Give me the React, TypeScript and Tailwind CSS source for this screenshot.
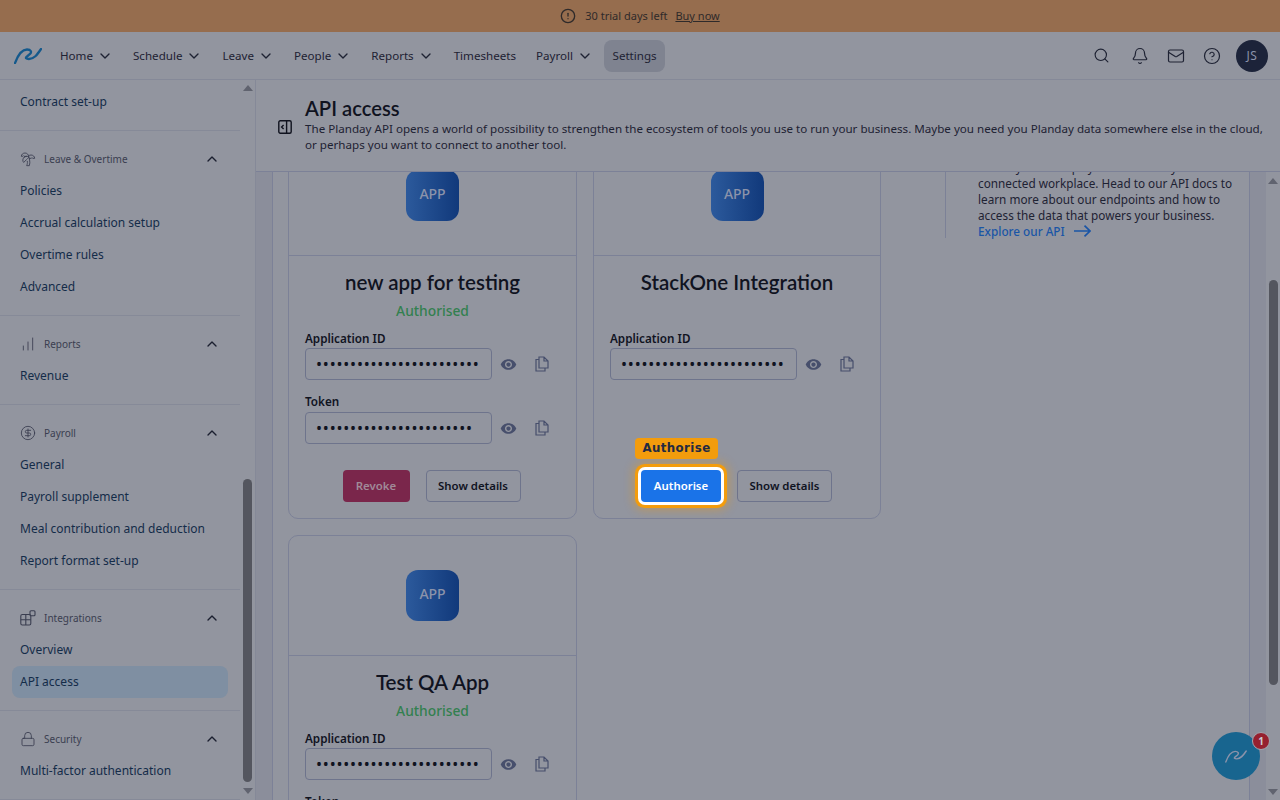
import { Bell, ChartNoAxesColumnIncreasing, ChevronDown, ChevronUp, CircleAlert, CircleDollarSign, CircleHelp, Lock, Mail, Search, TreePalm } from "lucide-react";
import { MdVisibility } from "react-icons/md";
import type { ReactNode } from "react";

const font = { fontFamily: '"Noto Sans", sans-serif' };
const titleFont = { fontFamily: 'Lato, "Noto Sans", sans-serif' };

const navItems = [
  { label: "Home", menu: true },
  { label: "Schedule", menu: true },
  { label: "Leave", menu: true },
  { label: "People", menu: true },
  { label: "Reports", menu: true },
  { label: "Timesheets", menu: false },
  { label: "Payroll", menu: true },
];

function Logo({ className, width = 2 }: { className: string; width?: number }) {
  return (
    <svg viewBox="0 0 28 16" fill="none" stroke="currentColor" strokeWidth={width} strokeLinecap="round" className={className}>
      <path d="M1 15 C4 7 8 1.5 13 1.5 C17 1.5 18 4 16 6 L13 8.5 C11 10 12 11 15 11 C20 11 23 7 27 1" />
    </svg>
  );
}

function IntegrationsIcon() {
  return (
    <svg viewBox="0 0 16 16" fill="none" stroke="currentColor" strokeWidth="1.1" className="w-4 h-4">
      <rect x="0.8" y="4.5" width="10" height="10.5" rx="1.5" />
      <path d="M0.8 9.7 H10.8 M5.8 4.5 V15" />
      <rect x="10" y="0.8" width="5" height="5" rx="1" />
    </svg>
  );
}

function CollapseIcon() {
  return (
    <svg viewBox="0 0 14 14" fill="none" stroke="currentColor" strokeWidth="1.4" className="w-[14px] h-[14px]">
      <rect x="0.8" y="0.8" width="12.4" height="12.4" rx="1.5" />
      <path d="M8.6 0.8 V13.2 M5.6 5 L3.6 7 L5.6 9" />
    </svg>
  );
}

function CopyIcon() {
  return (
    <svg viewBox="0 0 14 16" fill="none" stroke="currentColor" strokeWidth="1.2" className="w-[14px] h-4 text-[#474f6c]">
      <path d="M4 1 H9 L13 5 V12 H4 Z M9 1 V5 H13" />
      <path d="M4 3.5 H1 V15 H10 V12" />
    </svg>
  );
}

function ExploreArrow() {
  return (
    <svg viewBox="0 0 17 12" fill="none" stroke="currentColor" strokeWidth="1.7" className="w-[17px] h-3 ml-[9px]">
      <path d="M0 6 H16 M10.5 0.7 L16 6 L10.5 11.3" />
    </svg>
  );
}

function SideItem({ label, active }: { label: string; active?: boolean }) {
  return (
    <div className={`h-8 mx-3 px-2 flex items-center rounded-lg text-xs text-[#142c49] ${active ? "bg-[#7f8fa2]" : ""}`}>
      {label}
    </div>
  );
}

function SideSection({ icon, title, items, active }: { icon: ReactNode; title: string; items: string[]; active?: string }) {
  return (
    <div className="pt-4 pb-3 border-b border-[#868a98]">
      <div className="h-6 mb-1 pl-5 pr-5 flex items-center text-[#3a3e50]">
        <span className="w-6 flex items-center">{icon}</span>
        <span className="text-[10px] flex-1">{title}</span>
        <ChevronUp className="w-4 h-4 text-[#1b1f2f]" />
      </div>
      {items.map((item) => (
        <SideItem key={item} label={item} active={item === active} />
      ))}
    </div>
  );
}

function SecretField({ label, value }: { label: string; value: string }) {
  return (
    <div className="mb-[5px]">
      <div className={`text-[11.7px] font-semibold leading-4 text-[#10131f] ${label === "Token" ? "mb-[3px]" : "mb-[2px]"}`}>{label}</div>
      <div className="flex items-center">
        <input
          type="password"
          readOnly
          value={value}
          className="w-[187px] h-8 pl-[10px] pr-1 border border-[#6e748c] rounded bg-transparent text-[16px] tracking-[0.8px] text-[#10131f] outline-none"
        />
        <MdVisibility className="w-[17px] h-[17px] ml-2 text-[#474f6c]" />
        <span className="ml-[18px] flex"><CopyIcon /></span>
      </div>
    </div>
  );
}

function ShowDetails() {
  return (
    <button className="h-8 w-[95px] border border-[#6e748c] rounded text-[11.4px] font-semibold text-[#10131f]">
      Show details
    </button>
  );
}

function AppCard({ name, authorised, token, children }: { name: string; authorised?: boolean; token?: boolean; children: ReactNode }) {
  return (
    <div className="border border-[#7c8197] rounded-[10px]">
      <div className="h-[120px] flex items-center justify-center border-b border-[#7c8197]">
        <div className="w-[53px] h-[51px] pb-[3px] rounded-xl bg-gradient-to-r from-[#2c5a9c] to-[#11397b] flex items-center justify-center text-sm font-medium text-[#8b93aa]">
          APP
        </div>
      </div>
      <div className="h-[262px] px-4 flex flex-col relative">
        <div style={titleFont} className="text-[20.5px] leading-7 font-semibold text-[#10131f] text-center mt-3">{name}</div>
        <div className="h-[20px] mt-[5px] text-[13.8px] leading-5 font-medium text-[#33804f] text-center">{authorised ? "Authorised" : ""}</div>
        <div className="mt-[9px]">
          <SecretField label="Application ID" value="abcdefghijklmnopqrstuvwx" />
          {token && <div className="mt-[13px]"><SecretField label="Token" value="abcdefghijklmnopqrstuvw" /></div>}
        </div>
        {children}
      </div>
    </div>
  );
}

export default function App() {
  return (
    <div style={font} className="h-screen overflow-hidden flex flex-col bg-[#92959f] relative">
      <div className="h-8 shrink-0 bg-[#966d4e] flex items-center justify-center text-[11px] text-[#2f2a2a]">
        <CircleAlert className="w-4 h-4 mr-[9px]" />
        <span>30 trial days left</span>
        <span className="ml-[8px] underline">Buy now</span>
      </div>

      <div className="h-12 shrink-0 border-b border-[#858998] flex items-center pl-[14px] pr-3">
        <Logo className="w-7 h-4 text-[#14598c]" width={2.3} />
        <div className="flex items-center ml-[9px] text-[11.6px] text-[#1e2233]">
          {navItems.map((item) => (
            <div key={item.label} className="h-8 pl-[9px] pr-[11px] flex items-center">
              {item.label}
              {item.menu && <ChevronDown className="w-4 h-4 ml-1" />}
            </div>
          ))}
          <div className="h-8 px-[8.5px] flex items-center rounded-lg bg-[#7f8390]">Settings</div>
        </div>
        <div className="ml-auto flex items-center text-[#1e2233]">
          <Search className="w-[17px] h-[17px]" strokeWidth={1.6} />
          <Bell className="w-[18px] h-[18px] ml-[21px]" strokeWidth={1.6} />
          <Mail className="w-[18px] h-[18px] ml-[18px]" strokeWidth={1.6} />
          <CircleHelp className="w-[18px] h-[18px] ml-[18px]" strokeWidth={1.6} />
          <div className="w-8 h-8 ml-[15px] rounded-full bg-[#1c2339] text-[#8b93aa] text-xs tracking-[0.5px] flex items-center justify-center">JS</div>
        </div>
      </div>

      <div className="flex-1 flex min-h-0">
        <div className="w-[256px] shrink-0 border-r border-[#858998] flex overflow-hidden">
          <div className="w-[240px] shrink-0 pt-[6px]">
            <div className="pb-3 border-b border-[#868a98]">
              <SideItem label="Contract set-up" />
            </div>
            <SideSection icon={<TreePalm className="w-4 h-4" strokeWidth={1.3} />} title="Leave & Overtime" items={["Policies", "Accrual calculation setup", "Overtime rules", "Advanced"]} />
            <SideSection icon={<ChartNoAxesColumnIncreasing className="w-4 h-4" strokeWidth={1.3} />} title="Reports" items={["Revenue"]} />
            <SideSection icon={<CircleDollarSign className="w-4 h-4" strokeWidth={1.3} />} title="Payroll" items={["General", "Payroll supplement", "Meal contribution and deduction", "Report format set-up"]} />
            <SideSection icon={<IntegrationsIcon />} title="Integrations" items={["Overview", "API access"]} active="API access" />
            <SideSection icon={<Lock className="w-4 h-4" strokeWidth={1.3} />} title="Security" items={["Multi-factor authentication"]} />
          </div>
          <div className="flex-1 flex flex-col items-center relative">
            <div className="mt-[5px] w-0 h-0 border-x-[5px] border-x-transparent border-b-[6px] border-b-[#60636f]" />
            <div className="mt-[388px] w-[9px] h-[303px] rounded-full bg-[#54565f]" />
            <div className="mt-[6px] w-0 h-0 border-x-[5px] border-x-transparent border-t-[6px] border-t-[#60636f]" />
          </div>
        </div>

        <div className="flex-1 min-w-0 flex flex-col">
          <div className="h-[92px] shrink-0 border-b border-[#7c8197] relative z-10 bg-[#92959f] flex items-center pl-[22px] pr-4 text-[#10131f]">
            <span className="flex mr-[13px] mt-[3px]"><CollapseIcon /></span>
            <div className="mt-[-3px]">
              <div style={titleFont} className="text-[20.2px] leading-[26px] font-semibold">API access</div>
              <div className="text-[11.62px] leading-4 text-[#1e2233]">
                The Planday API opens a world of possibility to strengthen the ecosystem of tools you use to run your business. Maybe you need you Planday data somewhere else in the cloud, or perhaps you want to connect to another tool.
              </div>
            </div>
          </div>

          <div className="flex-1 min-h-0 flex overflow-hidden">
            <div className="w-4 shrink-0 bg-[#8b8e9b]" />
            <div className="w-[978px] shrink-0 border-x border-[#7c8197] pl-[15px] flex items-start -mt-[37px]">
              <div className="grid grid-cols-[289px_288px] gap-x-4 gap-y-4">
                <AppCard name="new app for testing" authorised token>
                  <div className="absolute left-0 right-[2px] top-[214px] flex justify-center gap-4">
                    <button className="h-8 w-[67px] rounded bg-[#7a264b] text-[11.4px] font-semibold text-[#a08a98]">Revoke</button>
                    <ShowDetails />
                  </div>
                </AppCard>
                <AppCard name="StackOne Integration">
                  <div className="absolute left-[47px] top-[214px] flex items-center gap-4">
                    <div className="relative">
                      <div className="absolute left-[-6px] -top-8 w-[83px] h-[21px] rounded bg-[#f39c0c] flex items-center justify-center text-[11.8px] font-bold tracking-[0.4px] text-[#232a42]" style={{ fontFamily: '"DejaVu Sans", sans-serif' }}>
                        Authorise
                      </div>
                      <button className="block h-8 w-[80px] rounded bg-[#1a73e8] text-[11.4px] font-semibold text-white ring-[3px] ring-white shadow-[0_0_0_6px_#f39c0c,0_0_10px_8px_rgba(243,156,12,0.4)]">
                        Authorise
                      </button>
                    </div>
                    <ShowDetails />
                  </div>
                </AppCard>
                <AppCard name="Test QA App" authorised token>
                  <div />
                </AppCard>
              </div>
              <div className="ml-[64px] mt-[37px] h-[66px] w-[304px] border-l border-[#7c8197] pl-8 text-[11.75px] leading-4 text-[#1e2233] self-start">
                <div className="-mt-[16px] pt-[3px]">
                  <div>Planday's API helps you build a truly</div>
                  <div>connected workplace. Head to our API docs to</div>
                  <div>learn more about our endpoints and how to</div>
                  <div>access the data that powers your business.</div>
                  <div className="h-4 flex items-center font-medium text-[#1a55a6]">
                    Explore our API
                    <ExploreArrow />
                  </div>
                </div>
              </div>
            </div>
            <div className="w-4 shrink-0 bg-[#8b8e9b]" />
            <div className="flex-1 flex flex-col items-center">
              <div className="mt-[6px] w-0 h-0 border-x-[5px] border-x-transparent border-b-[6px] border-b-[#60636f]" />
              <div className="mt-[96px] w-[9px] h-[405px] rounded-full bg-[#54565f]" />
              <div className="mt-[104px] w-0 h-0 border-x-[5px] border-x-transparent border-t-[6px] border-t-[#60636f]" />
            </div>
          </div>
        </div>
      </div>

      <div className="absolute left-[1212px] top-[732px] w-12 h-12 rounded-full bg-[#18658f] flex items-center justify-center z-20">
        <Logo className="w-[22px] h-[13px] text-[#8b93aa]" width={1.8} />
        <div className="absolute top-0 -right-[10px] w-[18px] h-[18px] rounded-full border border-[#a3a6af] bg-[#96202f] text-[10px] font-bold text-[#c9ccd4] flex items-center justify-center">
          1
        </div>
      </div>
    </div>
  );
}
